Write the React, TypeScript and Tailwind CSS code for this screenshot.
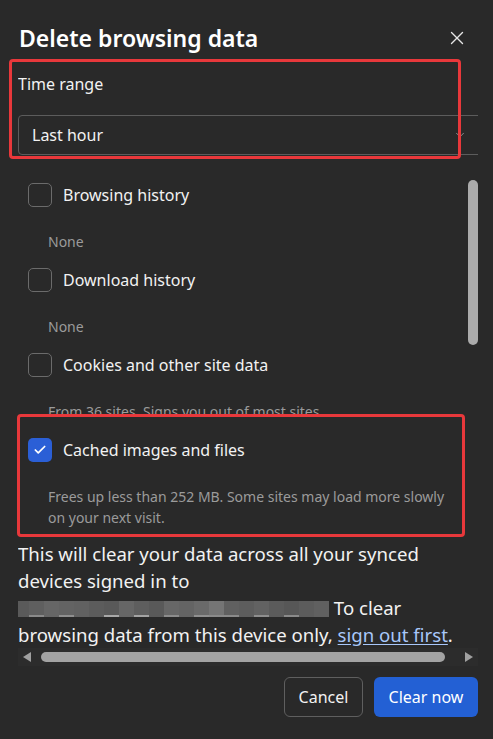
import { Check, X, ChevronDown } from "lucide-react";

// Redacted account name, drawn as pixel blocks
const REDACT_CELLS = [
  { bg: "bg-[#5a5a5a]", line: "bg-[#5a5a5a]" },
  { bg: "bg-[#5f5f5f]", line: "bg-[#8a8a8a]" },
  { bg: "bg-[#666666]", line: "bg-[#666666]" },
  { bg: "bg-[#636363]", line: "bg-[#8f8f8f]" },
  { bg: "bg-[#616161]", line: "bg-[#616161]" },
  { bg: "bg-[#5c5c5c]", line: "bg-[#5c5c5c]" },
  { bg: "bg-[#595959]", line: "bg-[#a8a8a8]" },
  { bg: "bg-[#666666]", line: "bg-[#666666]" },
  { bg: "bg-[#5e5e5e]", line: "bg-[#a3a3a3]" },
  { bg: "bg-[#595959]", line: "bg-[#595959]" },
  { bg: "bg-[#676767]", line: "bg-[#8c8c8c]" },
  { bg: "bg-[#646464]", line: "bg-[#646464]" },
  { bg: "bg-[#6a6a6a]", line: "bg-[#909090]" },
  { bg: "bg-[#757575]", line: "bg-[#8a8a8a]" },
  { bg: "bg-[#606060]", line: "bg-[#8a8a8a]" },
  { bg: "bg-[#5d5d5d]", line: "bg-[#5d5d5d]" },
  { bg: "bg-[#626262]", line: "bg-[#8e8e8e]" },
  { bg: "bg-[#5b5b5b]", line: "bg-[#5b5b5b]" },
  { bg: "bg-[#575757]", line: "bg-[#8a8a8a]" },
  { bg: "bg-[#5c5c5c]", line: "bg-[#5c5c5c]" },
  { bg: "bg-[#606060]", line: "bg-[#606060]" },
];

function Checkbox({ checked }: { checked?: boolean }) {
  return (
    <div
      className={`w-6 h-6 rounded-[5px] flex items-center justify-center shrink-0 ${
        checked ? "bg-[#2b5fd6]" : "border border-[#6b6b6b]"
      }`}
    >
      {checked && <Check size={14} strokeWidth={3} color="white" />}
    </div>
  );
}

function Option({
  label,
  desc,
  checked,
}: {
  label: string;
  desc: string;
  checked?: boolean;
}) {
  return (
    <div className="pl-[10px]">
      <div className="flex items-center gap-[11px] h-6">
        <Checkbox checked={checked} />
        <span className="text-[16px] text-[#f2f2f2]">{label}</span>
      </div>
      <p className="mt-6 pl-[20px] pr-[20px] text-[14px] leading-[21px] text-[#9b9b9b]">
        {desc}
      </p>
    </div>
  );
}

export default function App() {
  return (
    <div
      className="relative w-[493px] h-[739px] bg-[#292929] overflow-hidden text-white"
      style={{ fontFamily: '"Noto Sans", sans-serif' }}
    >
      {/* Header */}
      <div className="flex items-center justify-between pl-[19px] pr-[25px] pt-[22px] h-[54px]">
        <h1 className="text-[23px] font-semibold leading-[30px]">Delete browsing data</h1>
        <X size={22} strokeWidth={1.5} color="#e6e6e6" />
      </div>

      {/* Time range */}
      <div className="ml-[18px] w-[460px] overflow-hidden">
        <div className="mt-[18px] text-[16px] leading-[24px] text-[#f2f2f2]">Time range</div>
        <div className="mt-[19px] w-[480px] h-10 border border-[#5c5c5c] rounded-[4px] flex items-center justify-between pl-[13px] pr-[30px]">
          <span className="text-[16px] text-[#f2f2f2]">Last hour</span>
          <ChevronDown size={14} strokeWidth={1.5} color="#9a9a9a" />
        </div>
      </div>

      {/* Scroll area */}
      <div className="ml-[18px] w-[460px] mt-[20px]">
        <div className="flex">
          <div className="flex-1 pt-[8px] overflow-hidden">
            <Option label="Browsing history" desc="None" />
            <div className="h-4" />
            <Option label="Download history" desc="None" />
            <div className="h-4" />
            <div className="h-[61px] overflow-hidden">
              <Option label="Cookies and other site data" desc="From 36 sites. Signs you out of most sites" />
            </div>
            <div className="h-6" />
            <Option
              checked
              label="Cached images and files"
              desc="Frees up less than 252 MB. Some sites may load more slowly on your next visit."
            />
            <p className="mt-[12px] pr-[10px] text-[18.6px] leading-[27px] text-[#f2f2f2]">
              This will clear your data across all your synced devices signed in to{" "}
              <span className="inline-flex -ml-[4px] h-[16px] align-baseline">
                {REDACT_CELLS.map((c, i) => (
                  <span key={i} className={`w-[15px] h-full flex flex-col ${c.bg}`}>
                    <span className="flex-1" />
                    <span className={`h-[2px] ${c.line}`} />
                  </span>
                ))}
              </span>{" "}
              To clear browsing data from this device only,{" "}
              <span className="text-[#a8c7fa] underline underline-offset-[2px]">sign out first</span>.
            </p>
          </div>
          <div className="w-[10px] pt-[5px]">
            <div className="w-[10px] h-[165px] rounded-full bg-[#ababab]" />
          </div>
        </div>

        {/* Horizontal scrollbar */}
        <div className="h-[18px] bg-[#2c2c2c] flex items-center px-[5px] gap-[10px]">
          <svg width="8" height="10" viewBox="0 0 8 10">
            <polygon points="8,0 8,10 0,5" fill="#a0a0a0" />
          </svg>
          <div className="flex-1 h-[10px] rounded-full bg-[#a3a3a3] mr-[10px]" />
          <svg width="8" height="10" viewBox="0 0 8 10">
            <polygon points="0,0 0,10 8,5" fill="#a0a0a0" />
          </svg>
        </div>
      </div>

      {/* Buttons */}
      <div className="flex justify-end gap-[11px] pr-[15px] mt-[11px]">
        <button className="w-[79px] h-10 rounded-[6px] border border-[#5f5f5f] text-[16px] text-[#f2f2f2]">
          Cancel
        </button>
        <button className="w-[104px] h-10 rounded-[6px] bg-[#2360d4] text-[16px] text-white">
          Clear now
        </button>
      </div>

      {/* Annotation boxes */}
      <div className="absolute left-[9px] top-[59px] w-[452px] h-[100px] border-[3px] border-[#e8383b] rounded-[4px]" />
      <div className="absolute left-[17px] top-[414px] w-[448px] h-[123px] border-[3px] border-[#e8383b] rounded-[4px]" />
    </div>
  );
}
